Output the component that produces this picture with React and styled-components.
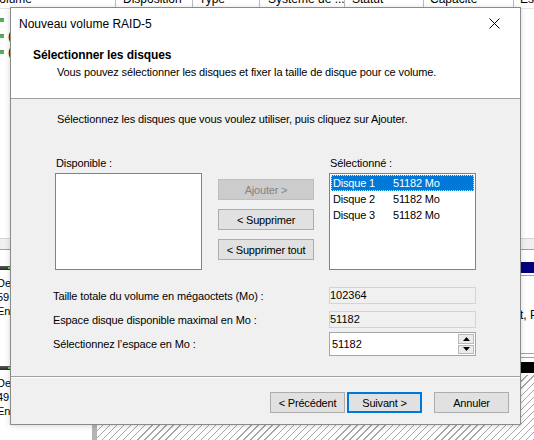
import React from "react";
import styled, { createGlobalStyle } from "styled-components";

const GlobalStyle = createGlobalStyle`
  html, body { margin: 0; padding: 0; }
  body {
    width: 534px; height: 440px; overflow: hidden; background: #fff;
    font-family: "Liberation Sans", Arial, sans-serif; color: #000;
  }
  *, *::before, *::after { box-sizing: border-box; }
`;

const Stage = styled.div`
  position: relative;
  width: 534px;
  height: 440px;
  overflow: hidden;
  background: #fff;
`;

/* ---------- background: disk management window ---------- */
const Backdrop = styled.div`
  display: flex;
  flex-direction: column;
  width: 534px;
  height: 440px;
  font-size: 12px;
`;

const HeaderRow = styled.div`
  display: flex;
  flex: none;
  height: 18px;
  margin-top: -9px;
  border-bottom: 1px solid #e5e5e5;
  line-height: 17px;
  white-space: nowrap;
`;

const HeaderCell = styled.div`
  flex: none;
  width: ${(p) => p.$w}px;
  padding-left: ${(p) => p.$pad}px;
  text-indent: ${(p) => p.$indent || 0}px;
  border-right: 1px solid #bcbcbc;
  overflow: hidden;
`;

const VolumeList = styled.div`
  flex: none;
  height: 229px;
  padding-top: 3px;
`;

const VolumeRow = styled.div`
  display: flex;
  align-items: center;
  height: 16px;
  line-height: 16px;
`;

const DriveIcon = styled.span`
  flex: none;
  width: 4px;
  height: 4px;
  margin-right: 4px;
  background: #3fbf3f;
  border-top: 1px solid #6b8f6b;
`;

const Splitter = styled.div`
  flex: none;
  height: 12px;
  background: #f0f0f0;
  border-top: 1px solid #d4d4d4;
  border-bottom: 1px solid #a0a0a0;
`;

const DiskArea = styled.div`
  flex: 1;
  display: flex;
  flex-direction: column;
  gap: 4px;
  padding-top: 12px;
`;

const DiskRow = styled.div`
  flex: none;
  display: grid;
  grid-template-columns: 92px 5px 1fr;
  height: ${(p) => p.$h}px;
`;

const DiskLabel = styled.div`
  padding-top: 4px;
  background: #fff;
  white-space: nowrap;
  overflow: hidden;
`;

const LabelBand = styled.div`
  display: flex;
  align-items: center;
  height: 4px;
  padding-left: 8px;
  background: linear-gradient(#5a5a5a, #2a2a2a);
`;

const StatusDot = styled.span`
  width: 2px;
  height: 2px;
  background: #4be04b;
`;

const LabelLines = styled.div`
  padding-top: 6px;
  margin-left: -3px;
  font-size: 11px;
  line-height: 14px;
`;

const Gutter = styled.div`
  background: #b4b4b4;
`;

const Partition = styled.div`
  display: flex;
  flex-direction: column;
  overflow: hidden;
  ${(p) => (p.$closed ? "border-bottom: 1px solid #a0a0a0; padding-bottom: 3px;" : "")}
`;

const PartitionBar = styled.div`
  flex: none;
  height: 11px;
  background: ${(p) => p.$color};
`;

const PartitionBody = styled.div`
  flex: 1;
  margin-top: 2px;
  padding-top: 32px;
  border-top: 1px solid #a0a0a0;
  border-bottom: 1px solid #a0a0a0;
  line-height: 14px;
  white-space: nowrap;
`;

const PartitionText = styled.div`
  padding-left: 423px;
`;

const HatchedBody = styled.div`
  flex: 1;
  margin-top: 2px;
  background: repeating-linear-gradient(
    135deg,
    #ffffff 0px,
    #ffffff 4px,
    #a6a6a6 4px,
    #a6a6a6 5px
  );
`;

/* ---------- dialog ---------- */
const Dialog = styled.div`
  position: absolute;
  left: 10px;
  top: 7px;
  width: 511px;
  height: 418px;
  display: flex;
  flex-direction: column;
  border: 1px solid #8a8a8a;
  background: #f0f0f0;
  box-shadow: 0 1px 6px rgba(0, 0, 0, 0.16);
  font-family: "Liberation Sans", Arial, sans-serif;
  color: #000;
`;

const TitleBar = styled.div`
  flex: none;
  height: 31px;
  display: flex;
  align-items: center;
  justify-content: space-between;
  padding: 0 20px 0 8px;
  background: #fff;
  font-size: 12px;
`;

const CloseIcon = () => (
  <svg width="11" height="11" viewBox="0 0 11 11" aria-hidden="true">
    <path d="M0.5 0.5 L10.5 10.5 M10.5 0.5 L0.5 10.5" stroke="#000" strokeWidth="1" fill="none" />
  </svg>
);

const WizardHeader = styled.div`
  flex: none;
  height: 60px;
  padding: 8px 0 0 22px;
  background: #fff;
  border-bottom: 1px solid #a0a0a0;
`;

const HeaderTitle = styled.div`
  font-size: 12px;
  font-weight: bold;
  line-height: 16px;
  letter-spacing: -0.1px;
`;

const SmallText = styled.div`
  font-size: 11px;
  line-height: 14px;
  letter-spacing: -0.12px;
  white-space: nowrap;
`;

const HeaderSubtitle = styled(SmallText)`
  margin: 2px 0 0 24px;
`;

const Body = styled.div`
  flex: 1;
  padding: 13px 0 0 44px;
`;

const Instruction = styled(SmallText)`
  margin-left: 2px;
`;

const ListsGrid = styled.div`
  display: grid;
  grid-template-columns: 147px 95px 147px;
  grid-template-rows: 14px 97px;
  column-gap: 16px;
  row-gap: 3px;
  margin-top: 30px;
`;

const ListLabel = styled(SmallText)`
  padding-left: 1px;
  grid-column: ${(p) => p.$col};
`;

const ListBox = styled.div`
  grid-column: ${(p) => p.$col};
  border: 1px solid #828282;
  background: #fff;
  padding: 1px;
`;

const ListItem = styled.div`
  display: grid;
  grid-template-columns: 60px 1fr;
  height: 16px;
  padding-left: 1px;
  font-size: 11px;
  line-height: 14px;
  letter-spacing: -0.18px;
  white-space: nowrap;
  color: ${(p) => (p.$selected ? "#fff" : "#000")};
  background: ${(p) => (p.$selected ? "#0078d7" : "transparent")};
  border: 1px dotted ${(p) => (p.$selected ? "#cfe3f7" : "transparent")};
`;

const MoveButtons = styled.div`
  grid-column: 2;
  display: flex;
  flex-direction: column;
  gap: 9px;
  padding-top: 6px;
`;

const Button = styled.button`
  height: 21px;
  width: ${(p) => p.$w || 75}px;
  padding: 0;
  margin: 0;
  font-family: "Liberation Sans", Arial, sans-serif;
  font-size: 11px;
  letter-spacing: -0.18px;
  color: ${(p) => (p.disabled ? "#838383" : "#000")};
  background: ${(p) => (p.disabled ? "#cccccc" : "#e1e1e1")};
  border: 1px solid ${(p) => (p.disabled ? "#bfbfbf" : p.$default ? "#0078d7" : "#adadad")};
  box-shadow: ${(p) => (p.$default ? "inset 0 0 0 1px #0078d7" : "none")};
  white-space: nowrap;
`;

const FieldRow = styled.div`
  display: grid;
  grid-template-columns: 276px 147px;
  align-items: center;
  height: ${(p) => p.$h}px;
  margin-top: ${(p) => p.$mt}px;
  margin-left: -2px;
`;

const ReadOnlyBox = styled.div`
  height: 17px;
  background: #f0f0f0;
  border: 1px solid #d4d4d4;
  font-size: 11px;
  line-height: 15px;
`;

const SpinBox = styled.div`
  display: flex;
  height: 24px;
  background: #fff;
  border: 1px solid #a5a5a5;
`;

const SpinValue = styled.div`
  flex: 1;
  padding-left: 2px;
  font-size: 11px;
  line-height: 22px;
`;

const SpinButtons = styled.div`
  flex: none;
  width: 17px;
  display: flex;
  flex-direction: column;
  gap: 1px;
  padding: 1px 1px 1px 0;
`;

const SpinButton = styled.div`
  flex: 1;
  display: flex;
  align-items: center;
  justify-content: center;
  background: #ececec;
  border: 1px solid #b9b9b9;
`;

const Arrow = ({ up }) => (
  <svg width="7" height="4" viewBox="0 0 7 4" aria-hidden="true">
    <polygon points={up ? "3.5,0 7,4 0,4" : "0,0 7,0 3.5,4"} fill="#000" />
  </svg>
);

const Footer = styled.div`
  flex: none;
  height: 48px;
  display: flex;
  align-items: flex-start;
  justify-content: flex-end;
  padding: 15px 11px 0 0;
  border-top: 1px solid #a0a0a0;
  box-shadow: inset 0 1px 0 #ffffff;
`;

const FooterGroup = styled.div`
  display: flex;
  gap: 2px;
  margin-right: 12px;
`;

const volumes = ["", "(C:)", "(D:)"];
const selectedDisks = [
  { name: "Disque 1", size: "51182 Mo" },
  { name: "Disque 2", size: "51182 Mo" },
  { name: "Disque 3", size: "51182 Mo" },
];

export default function App() {
  return (
    <>
      <GlobalStyle />
      <Stage>
        <Backdrop>
          <HeaderRow>
            <HeaderCell $w={116} $pad={0} $indent={-8}>Volume</HeaderCell>
            <HeaderCell $w={77} $pad={7}>Disposition</HeaderCell>
            <HeaderCell $w={67} $pad={6}>Type</HeaderCell>
            <HeaderCell $w={85} $pad={8}>Système de ...</HeaderCell>
            <HeaderCell $w={79} $pad={7}>Statut</HeaderCell>
            <HeaderCell $w={90} $pad={6}>Capacité</HeaderCell>
            <HeaderCell $w={110} $pad={6}>Espace libre</HeaderCell>
          </HeaderRow>
          <VolumeList>
            {volumes.map((v, i) => (
              <VolumeRow key={i}>
                <DriveIcon />
                <span>{v}</span>
              </VolumeRow>
            ))}
          </VolumeList>
          <Splitter />
          <DiskArea>
            <DiskRow $h={96}>
              <DiskLabel>
                <LabelBand><StatusDot /></LabelBand>
                <LabelLines>
                  <div>De base</div>
                  <div>59,98 Go</div>
                  <div>En ligne</div>
                </LabelLines>
              </DiskLabel>
              <Gutter />
              <Partition $closed>
                <PartitionBar $color="#000080" />
                <PartitionBody>
                  <PartitionText>t, Partition principale)</PartitionText>
                </PartitionBody>
              </Partition>
            </DiskRow>
            <DiskRow $h={120}>
              <DiskLabel>
                <LabelBand><StatusDot /></LabelBand>
                <LabelLines>
                  <div>De base</div>
                  <div>49,98 Go</div>
                  <div>En ligne</div>
                </LabelLines>
              </DiskLabel>
              <Gutter />
              <Partition>
                <PartitionBar $color="#000000" />
                <HatchedBody />
              </Partition>
            </DiskRow>
          </DiskArea>
        </Backdrop>

        <Dialog>
          <TitleBar>
            <span>Nouveau volume RAID-5</span>
            <CloseIcon />
          </TitleBar>
          <WizardHeader>
            <HeaderTitle>Sélectionner les disques</HeaderTitle>
            <HeaderSubtitle>
              Vous pouvez sélectionner les disques et fixer la taille de disque pour ce volume.
            </HeaderSubtitle>
          </WizardHeader>
          <Body>
            <Instruction>
              Sélectionnez les disques que vous voulez utiliser, puis cliquez sur Ajouter.
            </Instruction>
            <ListsGrid>
              <ListLabel $col={1}>Disponible :</ListLabel>
              <ListLabel $col={3}>Sélectionné :</ListLabel>
              <ListBox $col={1} />
              <MoveButtons>
                <Button $w={96} disabled>Ajouter &gt;</Button>
                <Button $w={96}>&lt; Supprimer</Button>
                <Button $w={96}>&lt; Supprimer tout</Button>
              </MoveButtons>
              <ListBox $col={3}>
                {selectedDisks.map((d, i) => (
                  <ListItem key={d.name} $selected={i === 0}>
                    <span>{d.name}</span>
                    <span>{d.size}</span>
                  </ListItem>
                ))}
              </ListBox>
            </ListsGrid>
            <FieldRow $h={17} $mt={17}>
              <SmallText>Taille totale du volume en mégaoctets (Mo) :</SmallText>
              <ReadOnlyBox>102364</ReadOnlyBox>
            </FieldRow>
            <FieldRow $h={17} $mt={7}>
              <SmallText>Espace disque disponible maximal en Mo :</SmallText>
              <ReadOnlyBox>51182</ReadOnlyBox>
            </FieldRow>
            <FieldRow $h={24} $mt={4}>
              <SmallText>Sélectionnez l’espace en Mo :</SmallText>
              <SpinBox>
                <SpinValue>51182</SpinValue>
                <SpinButtons>
                  <SpinButton><Arrow up /></SpinButton>
                  <SpinButton><Arrow /></SpinButton>
                </SpinButtons>
              </SpinBox>
            </FieldRow>
          </Body>
          <Footer>
            <FooterGroup>
              <Button>&lt; Précédent</Button>
              <Button $default>Suivant &gt;</Button>
            </FooterGroup>
            <Button>Annuler</Button>
          </Footer>
        </Dialog>
      </Stage>
    </>
  );
}
